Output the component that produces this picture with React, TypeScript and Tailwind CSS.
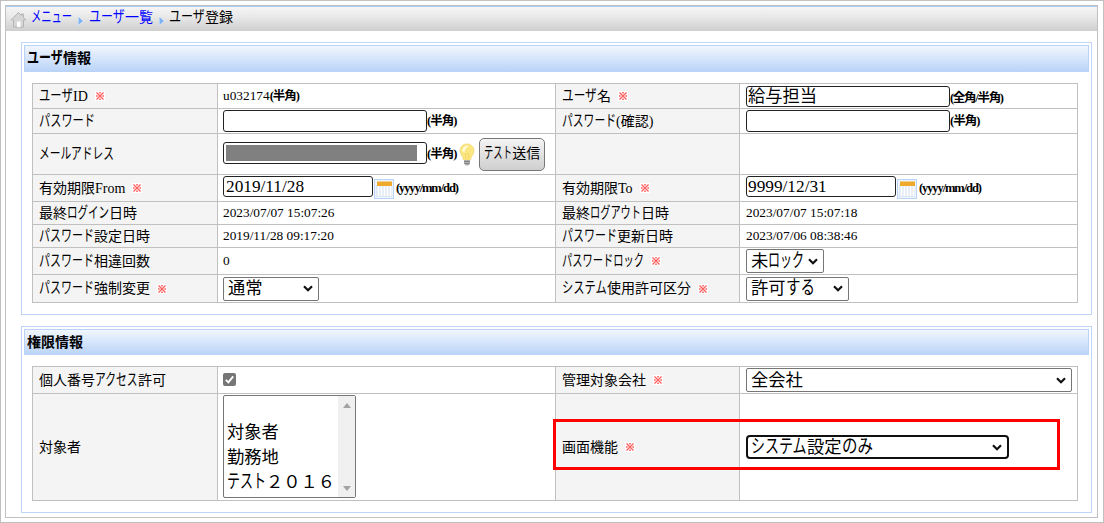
import type { ReactNode } from "react";

interface TxtProps {
  text: string;
  // かな部分ごとの幅(px)
  kana?: number[];
  size?: number;
}

// かな部分だけ字幅を詰めて表示する
function Txt({ text, kana = [], size = 14 }: TxtProps) {
  const parts = text.split(/([\u3041-\u30ff]+)/);
  const kanaSize = size * 1.1;
  return (
    <span className="inline-flex items-baseline whitespace-pre" style={{ fontSize: size, height: size }}>
      {parts.map((part, i) => {
        if (!part) return null;
        // 奇数番目がかな
        const width = i % 2 === 1 ? kana[(i - 1) / 2] : undefined;
        if (!width) return <span key={i}>{part}</span>;
        return (
          <span key={i} className="inline-block" style={{ width }}>
            <span
              className="inline-block origin-left"
              style={{
                fontSize: kanaSize,
                lineHeight: `${size * 0.9}px`,
                transform: `scaleX(${width / (part.length * kanaSize)})`,
              }}
            >
              {part}
            </span>
          </span>
        );
      })}
    </span>
  );
}

function Required() {
  return (
    <svg className="ml-[7px] size-[10px] shrink-0 bg-white" viewBox="0 0 10 10">
      <path d="M1.5 1.5l7 7M8.5 1.5l-7 7" stroke="#ff5c5c" strokeWidth="1.3" />
      <path d="M4.2 1h1.6v1.6H4.2zM4.2 7.4h1.6V9H4.2zM1 4.2h1.6v1.6H1zM7.4 4.2H9v1.6H7.4z" fill="#ff5c5c" />
    </svg>
  );
}

function Note({ children, className = "tracking-[-1px]" }: { children: ReactNode; className?: string }) {
  return (
    <span className={`text-[12.5px] font-bold whitespace-nowrap ${className}`}>{children}</span>
  );
}

function Chevron() {
  return (
    <svg className="h-[7px] w-[10px] shrink-0" viewBox="0 0 10 7">
      <path d="M1 1.2l4 4 4-4" fill="none" stroke="#111" strokeWidth="2.2" />
    </svg>
  );
}

function Select({ className, text, kana }: { className: string; text: string; kana?: number[] }) {
  return (
    <div className={`flex h-[24px] items-center justify-between bg-white ${className}`}>
      <span className="flex pt-px">
        <Txt text={text} kana={kana} size={17.3} />
      </span>
      <Chevron />
    </div>
  );
}

function Input({ className, children }: { className: string; children?: ReactNode }) {
  return (
    <div className={`flex items-center rounded-[3px] border border-[#222] bg-white ${className}`}>
      {children}
    </div>
  );
}

function Calendar() {
  return (
    <svg className="mt-[2px] ml-px size-[20px] shrink-0" viewBox="0 0 20 20">
      <rect x=".5" y=".5" width="19" height="19" fill="#edf4fd" stroke="#b9d4f7" />
      <rect x="2" y="6" width="16" height="12" fill="#dfe8f6" />
      <path d="M4.5 7v10M7.5 7v10M10.5 7v10M13.5 7v10M16.5 7v10" stroke="#fff" strokeWidth="1.6" />
      <rect x="3" y="2.5" width="15" height="4.5" fill="#efaa2b" />
    </svg>
  );
}

function Bulb() {
  return (
    <svg className="mt-[2px] ml-[3px] h-[24px] w-[16px] shrink-0" viewBox="0 0 16 24">
      <path d="M8 1C3.800 1 1 4 1 7.700c0 3.500 3 5.300 3.500 9.300h7C12 13 15 11.200 15 7.700 15 4 12.200 1 8 1z" fill="#fbe77f" stroke="#f3d778" strokeWidth=".8" />
      <path d="M3.500 8C3.500 4 6.500 2.300 9.500 3 7 4.500 5.500 7 5.500 10z" fill="#fffbe0" />
      <path d="M7 16l-1-5.500 2 1 2-1-1 5.500" fill="none" stroke="#f3d66a" strokeWidth=".8" />
      <path d="M5 17h6v3.500L9.500 22.500h-3L5 20.500z" fill="#b0b0b0" />
      <path d="M5 18.500h6M5.500 20.500h5" stroke="#777" strokeWidth=".8" />
    </svg>
  );
}

function House() {
  return (
    <svg className="mt-px size-[17px] shrink-0" viewBox="0 0 17 17">
      <path d="M8.500 1.500L1.200 9h2.300v7h10V9h2.300l-2.300-2.400V3h-2v1.600z" fill="#d6d6d6" stroke="#b4b4b4" strokeLinejoin="round" />
      <path d="M7 10.500h3.500V16H7z" fill="#fff" />
    </svg>
  );
}

function Arrow() {
  return (
    <svg className="mt-[3px] ml-[6px] h-[10px] w-[6px] shrink-0" viewBox="0 0 6 10">
      <path d="M0 0l6 5-6 5z" fill="#e8f2fd" />
      <path d="M.5 1L5 5 .5 9z" fill="#7fb2f0" />
    </svg>
  );
}

interface Label {
  text: string;
  kana?: number[];
  required?: boolean;
}

function LabelCell({ className, label }: { className: string; label?: Label }) {
  return (
    <div className={`flex shrink-0 items-center border-r border-[#c0c0c0] bg-[#f4f4f4] pl-[6px] ${className}`}>
      {label && (
        <span className="flex pt-px">
          <Txt text={label.text} kana={label.kana} />
        </span>
      )}
      {label?.required && <Required />}
    </div>
  );
}

interface RowProps {
  className: string;
  left: Label;
  leftValue: ReactNode;
  right?: Label;
  rightValue?: ReactNode;
}

function Row({ className, left, leftValue, right, rightValue }: RowProps) {
  return (
    <div className={`flex border-b border-[#c0c0c0] text-[13.33px] ${className}`}>
      <LabelCell className="w-[185px]" label={left} />
      <div className="flex w-[338px] shrink-0 items-center border-r border-[#c0c0c0] pl-[5px]">{leftValue}</div>
      <LabelCell className="w-[184px]" label={right} />
      <div className="flex w-[338px] shrink-0 items-center border-r border-[#c0c0c0] pl-[6px]">{rightValue}</div>
    </div>
  );
}

function Section({ className, title, children }: { className: string; title: ReactNode; children: ReactNode }) {
  return (
    <section className={`ml-[15px] w-[1071px] border border-[#bcd5f8] px-[2px] pt-[2px] ${className}`}>
      {title}
      <div className="mt-[11px] ml-[8px] w-[1046px] border-t border-l border-[#c0c0c0]">{children}</div>
    </section>
  );
}

const titleClass =
  "flex w-[1065px] items-center border border-b-0 border-[#b9d3f7] bg-linear-to-b from-[#f1f6fe] to-[#b9d3f7] pl-[2px] font-bold";
const selectClass = "rounded-[2px] border border-[#767676] pl-[4px] pr-[5px]";

export default function App() {
  return (
    <div className="h-[523px] w-[1104px] border border-[#c0c0c0] bg-white pt-[4px] pl-[4px] font-['Liberation_Serif','Noto_Sans_CJK_JP',serif] leading-none text-black">
      <div className="relative h-[513px] w-[1093px] border border-[#c0c0c0]">
        {/* パンくずリスト */}
        <nav className="flex h-[25px] items-center border-t border-[#a9cdf5] bg-linear-to-b from-[#f5f5f5] from-0% via-[#e9e9e9] via-40% to-[#cecece] to-100% pl-[4px]">
          <House />
          <a className="mb-[3px] ml-[4px] flex text-[#00f]"><Txt text="メニュー" kana={[41]} /></a>
          <Arrow />
          <a className="mb-[3px] ml-[5px] flex text-[#00f]"><Txt text="ユーザ一覧" kana={[36]} /></a>
          <Arrow />
          <span className="mb-[3px] ml-[4px] flex"><Txt text="ユーザ登録" kana={[36]} /></span>
        </nav>

        {/* ユーザ情報 */}
        <Section
          className="mt-[11px] h-[273px]"
          title={<h2 className={`h-[27px] ${titleClass}`}><Txt text="ユーザ情報" kana={[36]} /></h2>}
        >
          <Row
            className="h-[25px]"
            left={{ text: "ユーザID", kana: [34], required: true }}
            leftValue={<><span>u032174</span><Note>(半角)</Note></>}
            right={{ text: "ユーザ名", kana: [35], required: true }}
            rightValue={
              <>
                <Input className="h-[21px] w-[204px] pt-px pl-px"><Txt text="給与担当" size={17.3} /></Input>
                <Note className="pt-[4px] tracking-[-1.3px]">(全角/半角)</Note>
              </>
            }
          />
          <Row
            className="h-[25px]"
            left={{ text: "パスワード", kana: [56] }}
            leftValue={<><Input className="h-[22px] w-[204px]" /><Note className="pt-px tracking-[-1px]">(半角)</Note></>}
            right={{ text: "パスワード(確認)", kana: [54] }}
            rightValue={<><Input className="h-[22px] w-[204px]" /><Note className="pt-px tracking-[-1px]">(半角)</Note></>}
          />
          <Row
            className="h-[41px]"
            left={{ text: "メールアドレス", kana: [75] }}
            leftValue={
              <>
                <Input className="mb-[2px] h-[22px] w-[204px] pl-[2px]">
                  <div className="h-[16px] w-[191px] bg-[#808080]" />
                </Input>
                <Note className="pt-px tracking-[-1px]">(半角)</Note>
                <Bulb />
                <button className="ml-[4px] flex h-[33px] w-[66px] items-center justify-center rounded-[5px] border border-[#777] bg-linear-to-b from-[#f4f4f4] to-[#cfcfcf]">
                  <Txt text="テスト送信" kana={[28]} />
                </button>
              </>
            }
          />
          <Row
            className="h-[27px]"
            left={{ text: "有効期限From", required: true }}
            leftValue={
              <>
                <Input className="mb-[3px] h-[21px] w-[150px] pl-[2px] text-[17.3px]">2019/11/28</Input>
                <Calendar />
                <Note className="ml-[2px] pt-px tracking-[-1.1px]">(yyyy/mm/dd)</Note>
              </>
            }
            right={{ text: "有効期限To", required: true }}
            rightValue={
              <>
                <Input className="mb-[3px] h-[21px] w-[150px] pl-px text-[17.3px]">9999/12/31</Input>
                <Calendar />
                <Note className="ml-[2px] pt-px tracking-[-1.1px]">(yyyy/mm/dd)</Note>
              </>
            }
          />
          <Row
            className="h-[23px]"
            left={{ text: "最終ログイン日時", kana: [42] }}
            leftValue="2023/07/07 15:07:26"
            right={{ text: "最終ログアウト日時", kana: [51] }}
            rightValue="2023/07/07 15:07:18"
          />
          <Row
            className="h-[23px]"
            left={{ text: "パスワード設定日時", kana: [55] }}
            leftValue="2019/11/28 09:17:20"
            right={{ text: "パスワード更新日時", kana: [55] }}
            rightValue="2023/07/06 08:38:46"
          />
          <Row
            className="h-[27px]"
            left={{ text: "パスワード相違回数", kana: [55] }}
            leftValue="0"
            right={{ text: "パスワードロック", kana: [82], required: true }}
            rightValue={<Select className={`w-[78px] ${selectClass}`} text="未ロック" kana={[36]} />}
          />
          <Row
            className="h-[28px]"
            left={{ text: "パスワード強制変更", kana: [55], required: true }}
            leftValue={<Select className={`w-[96px] ${selectClass}`} text="通常" />}
            right={{ text: "システム使用許可区分", kana: [45], required: true }}
            rightValue={<Select className={`w-[103px] ${selectClass}`} text="許可する" kana={[29]} />}
          />
        </Section>

        {/* 権限情報 */}
        <Section
          className="mt-[11px] h-[187px]"
          title={<h2 className={`h-[26px] ${titleClass}`}><Txt text="権限情報" /></h2>}
        >
          <Row
            className="h-[27px]"
            left={{ text: "個人番号アクセス許可", kana: [43] }}
            leftValue={
              <svg className="mb-px size-[13px]" viewBox="0 0 13 13">
                <rect width="13" height="13" rx="2" fill="#767676" />
                <path d="M2.800 6.800l2.600 2.600 4.800-6" fill="none" stroke="#fff" strokeWidth="1.900" />
              </svg>
            }
            right={{ text: "管理対象会社", required: true }}
            rightValue={<Select className={`w-[326px] ${selectClass}`} text="全会社" />}
          />
          <Row
            className="h-[107px]"
            left={{ text: "対象者" }}
            leftValue={
              <div className="mb-px flex h-[103px] w-[133px] justify-between rounded-[2px] border border-[#767676]">
                <ul className="pt-[24px] pl-[3px]">
                  <li className="flex h-[25px] items-center"><Txt text="対象者" size={17.3} /></li>
                  <li className="flex h-[25px] items-center"><Txt text="勤務地" size={17.3} /></li>
                  <li className="flex h-[25px] items-center"><Txt text="テスト２０１６" kana={[39]} size={17.3} /></li>
                </ul>
                <div className="flex w-[17px] flex-col items-center justify-between bg-[#f0f0f0] pt-[7px] pb-[6px]">
                  <svg className="h-[5px] w-[8px]" viewBox="0 0 8 5"><path d="M0 5l4-5 4 5z" fill="#a3a3a3" /></svg>
                  <svg className="h-[5px] w-[8px]" viewBox="0 0 8 5"><path d="M0 0l4 5 4-5z" fill="#a3a3a3" /></svg>
                </div>
              </div>
            }
            right={{ text: "画面機能", required: true }}
            rightValue={
              <Select
                className="w-[263px] rounded-[4px] border-2 border-[#101010] pr-[5px] pl-[3px]"
                text="システム設定のみ"
                kana={[56, 31]}
              />
            }
          />
        </Section>

        {/* 強調枠 */}
        <div className="pointer-events-none absolute top-[413px] left-[547px] h-[51px] w-[507px] border-3 border-[#f00]" />
      </div>
    </div>
  );
}
